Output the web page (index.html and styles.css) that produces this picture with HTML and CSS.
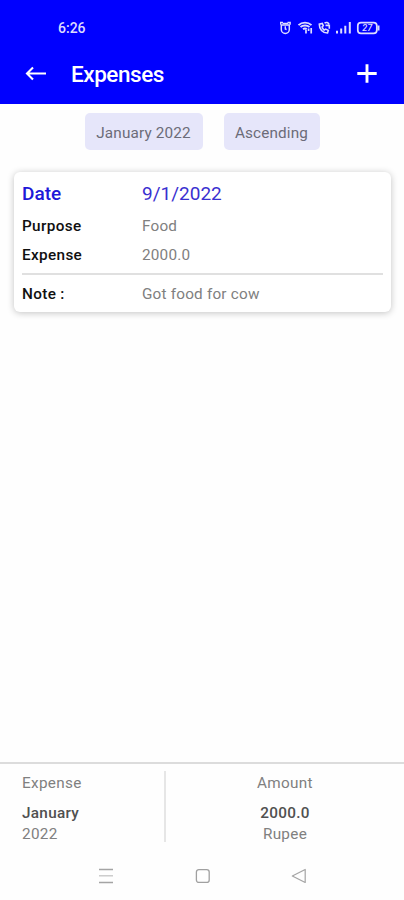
FILE: index.html
```html
<!DOCTYPE html>
<html lang="en">
<head>
<meta charset="utf-8">
<title>Expenses</title>
<link rel="stylesheet" href="styles.css">
</head>
<body>
<div class="screen">
  <header class="header">
    <div class="status">
      <span class="time">6:26</span>
      <svg class="status-icons" width="102" height="16" viewBox="0 0 102 16" fill="none" stroke="#dcdcff" stroke-width="1.5">
        <path d="M.5 4.800V2.500H3M7.500 2.500h2.600v2.300M2.600 3.500h5.600"/>
        <path d="M1.300 5v4.500a4 4 0 0 0 8 0V5z" stroke-linejoin="round"/>
        <path d="M5.300 6.300v2.700l1.300.5" stroke-width="1.400"/>
        <path d="M18.500 5.200C22 1.700 28 1.700 31.500 5.200M20.500 7c2.500-2 6.500-2 9 0M23 9.200c1.200-1 2.800-1 3.600 0" stroke-width="1.900"/>
        <path d="M26 9.500v4M31.200 8v5.500M28.600 8.500v2.500" stroke-width="1.700"/>
        <path d="M39.300 4.200c0 5 3.200 8.800 8.200 8.800l.8-2.600-2.600-1.300-1.500 1c-1.100-.9-1.700-1.900-2.100-3.100l1.200-1.300-1-2.300z" stroke-width="1.600"/>
        <path d="M44.500 3.200c1.800-1.400 3.700-.6 4.500 1M45.500 5.400h3.800v3.400" stroke-width="1.600"/>
        <path d="M57 13.500v-2.800M61.200 13.500V8.500M65.300 13.500V5.800M69.800 13.500V2" stroke-width="2"/>
        <rect x="77.800" y="2.600" width="19" height="10.800" rx="3.200" stroke-width="1.700"/>
        <path d="M98.500 5.500v5" stroke-width="2"/>
        <text x="87.300" y="11.200" text-anchor="middle" class="battery">27</text>
      </svg>
    </div>
    <div class="appbar">
      <svg width="22" height="16" viewBox="0 0 22 16" fill="none" stroke="#fff" stroke-width="2.100"><path d="M21 7.500H2M8 1.500 2 7.500l6 6"/></svg>
      <h1 class="title">Expenses</h1>
      <svg class="add" width="20" height="20" viewBox="0 0 20 20" stroke="#fff" stroke-width="2.900"><path d="M10 .3v18.400M.3 9.500h19.400"/></svg>
    </div>
  </header>
  <div class="filters">
    <button class="chip month">January 2022</button>
    <button class="chip order">Ascending</button>
  </div>
  <section class="card">
    <div class="row date"><b>Date</b><span>9/1/2022</span></div>
    <div class="row"><b>Purpose</b><span>Food</span></div>
    <div class="row cost"><b>Expense</b><span>2000.0</span></div>
    <div class="row note"><b>Note :</b><span>Got food for cow</span></div>
  </section>
  <footer class="summary">
    <div class="col period"><span class="label">Expense</span><b>January</b><span>2022</span></div>
    <div class="col amount"><span class="label">Amount</span><b>2000.0</b><span>Rupee</span></div>
  </footer>
  <nav class="nav">
    <svg width="16" height="16" viewBox="0 0 16 16" fill="none" stroke="#a4a4a4" stroke-width="1.300"><path d="M1 1.500h14M1 14.500h14"/><path d="M1 7.800h14" stroke="#c4c4c4"/></svg>
    <svg width="16" height="16" viewBox="0 0 16 16" fill="none" stroke="#a0a0a0" stroke-width="1.300"><rect x="1.400" y="1.600" width="12.800" height="12.800" rx="2.500"/></svg>
    <svg width="16" height="16" viewBox="0 0 16 16" fill="none" stroke="#a4a4a4" stroke-width="1.200" stroke-linejoin="round"><path d="M14.200 1.500v13L1.300 8z"/></svg>
  </nav>
</div>
</body>
</html>
```
FILE: styles.css
```css
* { box-sizing: border-box; }
body { margin: 0; background: #fff; font-family: Roboto, sans-serif; font-size: 15.3px; color: #808080; }
.screen { width: 404px; height: 900px; display: flex; flex-direction: column; overflow: hidden; background: #fefefe; }
.header { height: 104px; background: #0000ff; color: #fff; }
.status { height: 44px; padding: 12px 22px 0 58px; display: flex; justify-content: space-between; align-items: center; }
.time { font-size: 14px; font-weight: 500; color: #dcdcff; }
.battery { font-size: 9px; font-style: italic; font-weight: 500; fill: #dcdcff; stroke: none; }
.appbar { height: 60px; padding: 0 27px 0 25px; display: flex; align-items: center; }
.title { margin: 0 0 0 24px; font-size: 22.5px; font-weight: 500; line-height: 30px; letter-spacing: -.45px; }
.add { margin-left: auto; }
.filters { margin-top: 9px; height: 37px; display: flex; justify-content: center; gap: 21px; }
.chip { border: 0; border-radius: 5px; padding: 3px 0 0; background: #e6e6fa; color: #6c6c78; font: 15.3px Roboto, sans-serif; letter-spacing: .15px; }
.month { width: 118px; }
.order { width: 96px; }
.card { margin: 22px 13px 0 14px; height: 140px; padding: 6px 8px 0; border-radius: 6px; background: #fff; box-shadow: 0 1px 7px rgba(0,0,0,.24); }
.row { display: grid; grid-template-columns: 120px 1fr; height: 30px; align-items: center; letter-spacing: .2px; padding-top: 1px; }
.row b { font-weight: 500; color: #101010; letter-spacing: .35px; }
.row.date { height: 32px; font-size: 19px; letter-spacing: 0; color: #3a30d0; padding: 0 0 2px; }
.row.date b { color: #2018d8; letter-spacing: 0; }
.row.cost { padding: 0 0 1px; }
.row.note { margin-top: 3px; height: 40px; padding: 0 0 1px; border-top: 2px solid #e0e0e0; }
.summary { margin-top: auto; height: 90px; padding: 7px 0 0 22px; border-top: 2px solid #dcdcdc; display: flex; }
.col { display: flex; flex-direction: column; height: 71px; line-height: 21px; padding-top: 2px; letter-spacing: .3px; }
.col b { font-weight: 500; color: #505050; }
.label { margin-bottom: 9px; }
.period { width: 144px; border-right: 2px solid #e6e6e6; }
.amount { width: 238px; align-items: center; }
.nav { height: 48px; padding: 0 97px 0 98px; display: flex; align-items: center; justify-content: space-between; }
```
